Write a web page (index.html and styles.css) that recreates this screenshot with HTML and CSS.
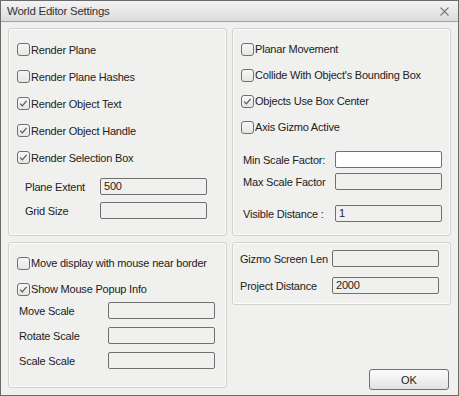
FILE: index.html
```html
<!DOCTYPE html>
<html>
<head>
<meta charset="utf-8">
<link rel="stylesheet" href="styles.css">
</head>
<body>
<div class="window">
  <div class="titlebar">
    <span class="title">World Editor Settings</span>
    <svg class="close" width="9" height="9" viewBox="0 0 9 9"><path d="M0.5 0.5L8.5 8.5M8.5 0.5L0.5 8.5" stroke="#7a7a7a" stroke-width="1.1" fill="none"/></svg>
  </div>
  <div class="content">
    <div class="panel tl">
      <div class="checks rows27">
        <label class="check"><span class="box"></span>Render Plane</label>
        <label class="check"><span class="box"></span>Render Plane Hashes</label>
        <label class="check"><span class="box on"><svg viewBox="0 0 13 13" width="13" height="13"><path d="M3.2 6.6L5.3 8.8L9.6 3.8" stroke="#555" stroke-width="1.2" fill="none"/></svg></span>Render Object Text</label>
        <label class="check"><span class="box on"><svg viewBox="0 0 13 13" width="13" height="13"><path d="M3.2 6.6L5.3 8.8L9.6 3.8" stroke="#555" stroke-width="1.2" fill="none"/></svg></span>Render Object Handle</label>
        <label class="check"><span class="box on"><svg viewBox="0 0 13 13" width="13" height="13"><path d="M3.2 6.6L5.3 8.8L9.6 3.8" stroke="#555" stroke-width="1.2" fill="none"/></svg></span>Render Selection Box</label>
      </div>
      <div class="fields f-tl">
        <div class="field"><span class="lbl">Plane Extent</span><span class="input">500</span></div>
        <div class="field"><span class="lbl">Grid Size</span><span class="input"></span></div>
      </div>
    </div>

    <div class="panel tr">
      <div class="checks rows26">
        <label class="check"><span class="box"></span>Planar Movement</label>
        <label class="check"><span class="box"></span>Collide With Object's Bounding Box</label>
        <label class="check"><span class="box on"><svg viewBox="0 0 13 13" width="13" height="13"><path d="M3.2 6.6L5.3 8.8L9.6 3.8" stroke="#555" stroke-width="1.2" fill="none"/></svg></span>Objects Use Box Center</label>
        <label class="check"><span class="box"></span>Axis Gizmo Active</label>
      </div>
      <div class="fields f-tr">
        <div class="field r1"><span class="lbl">Min Scale Factor:</span><span class="input white"></span></div>
        <div class="field r2"><span class="lbl">Max Scale Factor</span><span class="input"></span></div>
        <div class="field r3"><span class="lbl">Visible Distance :</span><span class="input">1</span></div>
      </div>
    </div>

    <div class="panel bl">
      <div class="checks rows26">
        <label class="check"><span class="box"></span>Move display with mouse near border</label>
        <label class="check"><span class="box on"><svg viewBox="0 0 13 13" width="13" height="13"><path d="M3.2 6.6L5.3 8.8L9.6 3.8" stroke="#555" stroke-width="1.2" fill="none"/></svg></span>Show Mouse Popup Info</label>
      </div>
      <div class="fields f-bl">
        <div class="field"><span class="lbl">Move Scale</span><span class="input"></span></div>
        <div class="field"><span class="lbl">Rotate Scale</span><span class="input"></span></div>
        <div class="field"><span class="lbl">Scale Scale</span><span class="input"></span></div>
      </div>
    </div>

    <div class="col-br">
      <div class="panel br">
        <div class="fields f-br">
          <div class="field"><span class="lbl">Gizmo Screen Len</span><span class="input"></span></div>
          <div class="field"><span class="lbl">Project Distance</span><span class="input">2000</span></div>
        </div>
      </div>
      <button class="ok">OK</button>
    </div>
  </div>
</div>
</body>
</html>
```

FILE: styles.css
```css
* { box-sizing: border-box; }
html, body { margin: 0; padding: 0; background: #f0f0ee; }
body {
  font-family: "Liberation Sans", Arial, sans-serif;
  font-size: 11px;
  letter-spacing: -0.2px;
  color: #222;
}
.window {
  width: 459px;
  height: 396px;
  border: 1px solid #6a6a6a;
  background: #f0f0ee;
  display: flex;
  flex-direction: column;
}
.titlebar {
  height: 21px;
  flex: none;
  background: linear-gradient(#f3f3f3, #dcdcdc);
  border-bottom: 1px solid #a0a0a0;
  display: flex;
  align-items: center;
  justify-content: space-between;
  padding: 0 9px 0 6px;
}
.title { font-size: 11.5px; color: #333; letter-spacing: -0.25px; }
.close { display: block; margin-top: 0; }
.content {
  flex: 1;
  padding: 6px 7px 7px 7px;
  display: grid;
  grid-template-columns: 219px 219px;
  grid-template-rows: 208px 146px;
  column-gap: 5px;
  row-gap: 6px;
}
.panel {
  border: 1px solid #d2d2d0;
  border-radius: 3px;
  box-shadow: inset 0 0 0 1px #fbfbfa;
  background: #f0f0ee;
}
.tl, .tr, .bl { padding: 7px 8px 0 8px; }
.checks { display: flex; flex-direction: column; }
.rows27 .check { height: 27px; }
.rows26 .check { height: 26px; }
.check {
  display: flex;
  align-items: center;
  white-space: nowrap;
}
.box {
  width: 13px;
  height: 13px;
  border: 1px solid #707070;
  border-radius: 3px;
  background: linear-gradient(#f6f6f6, #e6e6e4);
  margin-right: 1px;
  position: relative;
  flex: none;
}
.box svg { position: absolute; left: -1px; top: -1px; }
.fields { display: flex; flex-direction: column; }
.field { display: flex; align-items: center; height: 17px; }
.lbl { flex: none; white-space: nowrap; }
.input {
  width: 107px;
  height: 17px;
  border: 1px solid #707070;
  border-radius: 2px;
  background: #f0f0ee;
  padding-left: 3px;
  line-height: 15px;
  flex: none;
}
.input.white { background: #ffffff; }

.f-tl { margin-top: 7px; padding-left: 8px; gap: 7px; }
.f-tl .lbl { width: 75px; }

.f-tr { padding-left: 2px; }
.f-tr .lbl { width: 92px; }
.f-tr .r1 { margin-top: 11px; }
.f-tr .r2 { margin-top: 5px; }
.f-tr .r3 { margin-top: 15px; }

.f-bl { padding-left: 2px; gap: 8px; }
.f-bl .lbl { width: 89px; }

.col-br { display: flex; flex-direction: column; }
.br { height: 63px; padding: 7px 0 0 7px; }
.f-br { gap: 10px; }
.f-br .lbl { width: 92px; }

.ok {
  margin-top: auto;
  margin-bottom: -2px;
  margin-right: 2px;
  align-self: flex-end;
  width: 80px;
  height: 21px;
  border: 1px solid #707070;
  border-radius: 3px;
  background: linear-gradient(#fbfbfb 0%, #f0f0f0 50%, #e2e2e2 100%);
  font-family: "Liberation Sans", Arial, sans-serif;
  font-size: 11px;
  color: #222;
  padding: 0;
}
```
